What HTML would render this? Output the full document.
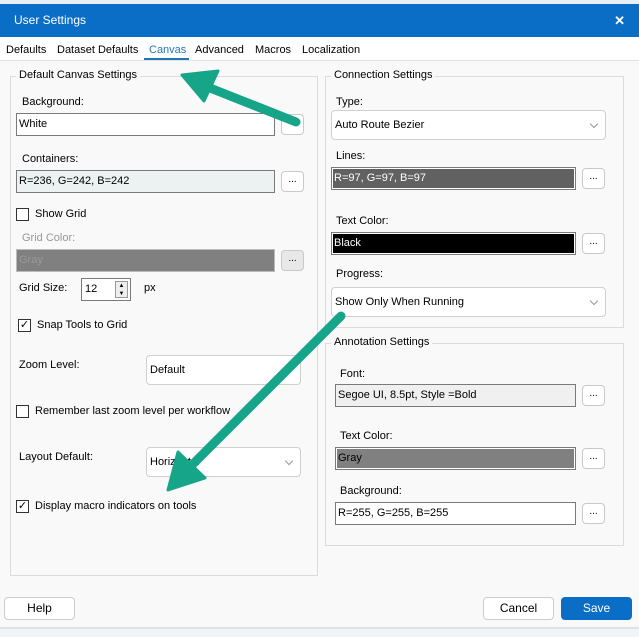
<!DOCTYPE html>
<html><head><meta charset="utf-8"><style>
*{box-sizing:border-box;margin:0;padding:0}
body{width:639px;height:637px;position:relative;overflow:hidden;background:#f9f9f9;font-family:"Liberation Sans",sans-serif;font-size:11px;color:#000}
.a{position:absolute;white-space:nowrap}
.tb{position:absolute;border:1px solid #7a7a7a;background:#fff;padding:3px 2px;height:23px;line-height:15px}
.btn{position:absolute;width:23px;height:21px;border:1px solid #c9c9c9;border-radius:4px;background:#fff;text-align:center;font-size:10px;line-height:16px}
.grp{position:absolute;border:1px solid #dcdcdc}
.gl{position:absolute;background:#f9f9f9;padding:0 3px;top:-8px;left:5px}
.cb{position:absolute;width:13px;height:13px;border:1px solid #333;background:#fff}
.dd{position:absolute;border:1px solid #d0d0d0;border-radius:4px;background:#fff;padding:0 3px;line-height:28px;height:30px}
.dd:after{content:"";position:absolute;right:8px;top:10px;width:5px;height:5px;border-right:1px solid #999;border-bottom:1px solid #999;transform:rotate(45deg)}
.pb{position:absolute;height:23px;border-radius:4px;text-align:center;line-height:21px;font-size:12px}
</style></head><body>
<div class="a" style="left:0;top:0;width:639px;height:4px;background:#e8eef4"></div>
<div class="a" style="left:0;top:4px;width:639px;height:33px;background:#0b6ec6;color:#fff;font-size:12px;line-height:33px;padding-left:14px">User Settings<span style="position:absolute;right:14px;font-weight:bold;font-size:13px">✕</span></div>
<div class="a" style="left:0;top:37px;width:639px;height:24px;background:#fff;border-bottom:1px solid #e2e2e2"></div>
<div class="a" style="left:6px;top:44px">Defaults</div>
<div class="a" style="left:57px;top:44px">Dataset Defaults</div>
<div class="a" style="left:149px;top:44px;color:#2277bb">Canvas</div>
<div class="a" style="left:144px;top:58px;width:45px;height:2px;background:#2277bb"></div>
<div class="a" style="left:195px;top:44px">Advanced</div>
<div class="a" style="left:255px;top:44px">Macros</div>
<div class="a" style="left:302px;top:44px">Localization</div>

<div class="grp" style="left:10px;top:76px;width:308px;height:500px"><div class="gl">Default Canvas Settings</div></div>
<div class="a" style="left:22px;top:96px">Background:</div>
<div class="tb" style="left:16px;top:113px;width:259px">White</div>
<div class="btn" style="left:281px;top:114px"></div>
<div class="a" style="left:22px;top:153px">Containers:</div>
<div class="tb" style="left:16px;top:170px;width:259px;background:#ecf2f2">R=236, G=242, B=242</div>
<div class="btn" style="left:281px;top:171px">...</div>
<div class="cb" style="left:16px;top:208px"></div>
<div class="a" style="left:35px;top:208px">Show Grid</div>
<div class="a" style="left:22px;top:232px;color:#999">Grid Color:</div>
<div class="tb" style="left:16px;top:249px;width:259px;background:#808080;border-color:#bbb;color:#999">Gray</div>
<div class="btn" style="left:281px;top:250px;background:#e8e8e8">...</div>
<div class="a" style="left:19px;top:282px">Grid Size:</div>
<div class="tb" style="left:81px;top:278px;width:50px;padding-left:3px">12</div>
<div class="a" style="left:115px;top:281px;width:13px;height:17px;border:1px solid #999;background:#eee;font-size:6px;line-height:8px;text-align:center">▲<br>▼</div>
<div class="a" style="left:144px;top:282px">px</div>
<div class="cb" style="left:18px;top:319px;font-size:11px;line-height:11px;text-align:center">✓</div>
<div class="a" style="left:37px;top:319px">Snap Tools to Grid</div>
<div class="a" style="left:19px;top:359px">Zoom Level:</div>
<div class="dd" style="left:146px;top:355px;width:155px">Default</div>
<div class="cb" style="left:16px;top:405px"></div>
<div class="a" style="left:35px;top:405px">Remember last zoom level per workflow</div>
<div class="a" style="left:19px;top:451px">Layout Default:</div>
<div class="dd" style="left:146px;top:447px;width:155px">Horizontal</div>
<div class="cb" style="left:16px;top:500px;font-size:11px;line-height:11px;text-align:center">✓</div>
<div class="a" style="left:35px;top:500px">Display macro indicators on tools</div>

<div class="grp" style="left:325px;top:76px;width:299px;height:252px"><div class="gl">Connection Settings</div></div>
<div class="a" style="left:336px;top:96px">Type:</div>
<div class="dd" style="left:331px;top:110px;width:275px">Auto Route Bezier</div>
<div class="a" style="left:336px;top:150px">Lines:</div>
<div class="tb" style="left:331px;top:167px;width:245px;background:#616161;color:#fff;box-shadow:inset 0 0 0 1px #fff">R=97, G=97, B=97</div>
<div class="btn" style="left:582px;top:168px">...</div>
<div class="a" style="left:336px;top:215px">Text Color:</div>
<div class="tb" style="left:331px;top:232px;width:245px;background:#000;color:#fff;box-shadow:inset 0 0 0 1px #fff">Black</div>
<div class="btn" style="left:582px;top:233px">...</div>
<div class="a" style="left:336px;top:268px">Progress:</div>
<div class="dd" style="left:331px;top:287px;width:275px">Show Only When Running</div>

<div class="grp" style="left:325px;top:343px;width:299px;height:203px"><div class="gl">Annotation Settings</div></div>
<div class="a" style="left:340px;top:368px">Font:</div>
<div class="tb" style="left:335px;top:384px;width:241px;background:#f0f0f0">Segoe UI, 8.5pt, Style =Bold</div>
<div class="btn" style="left:582px;top:385px">...</div>
<div class="a" style="left:340px;top:430px">Text Color:</div>
<div class="tb" style="left:335px;top:447px;width:241px;background:#808080;box-shadow:inset 0 0 0 1px #fff">Gray</div>
<div class="btn" style="left:582px;top:448px">...</div>
<div class="a" style="left:340px;top:485px">Background:</div>
<div class="tb" style="left:335px;top:502px;width:241px">R=255, G=255, B=255</div>
<div class="btn" style="left:582px;top:503px">...</div>

<div class="pb" style="left:4px;top:597px;width:71px;border:1px solid #ccc;background:#fff">Help</div>
<div class="pb" style="left:483px;top:597px;width:71px;border:1px solid #ccc;background:#fff">Cancel</div>
<div class="pb" style="left:561px;top:597px;width:71px;background:#0b6ec6;color:#fff;line-height:23px">Save</div>
<div class="a" style="left:0;top:627px;width:639px;height:10px;background:#f0f4f8;border-top:2px solid #dde2e6"></div>

<svg class="a" style="left:0;top:0" width="639" height="637">
<g fill="#17a589" stroke="#17a589" stroke-linecap="round">
<line x1="296" y1="122" x2="205" y2="86" stroke-width="9"/>
<polygon points="182,75 218,71 204,101" stroke-width="3" stroke-linejoin="round"/>
<line x1="341" y1="316" x2="190" y2="467" stroke-width="9"/>
<polygon points="168,490 178,452 205,478" stroke-width="3" stroke-linejoin="round"/>
</g></svg>
</body></html>
